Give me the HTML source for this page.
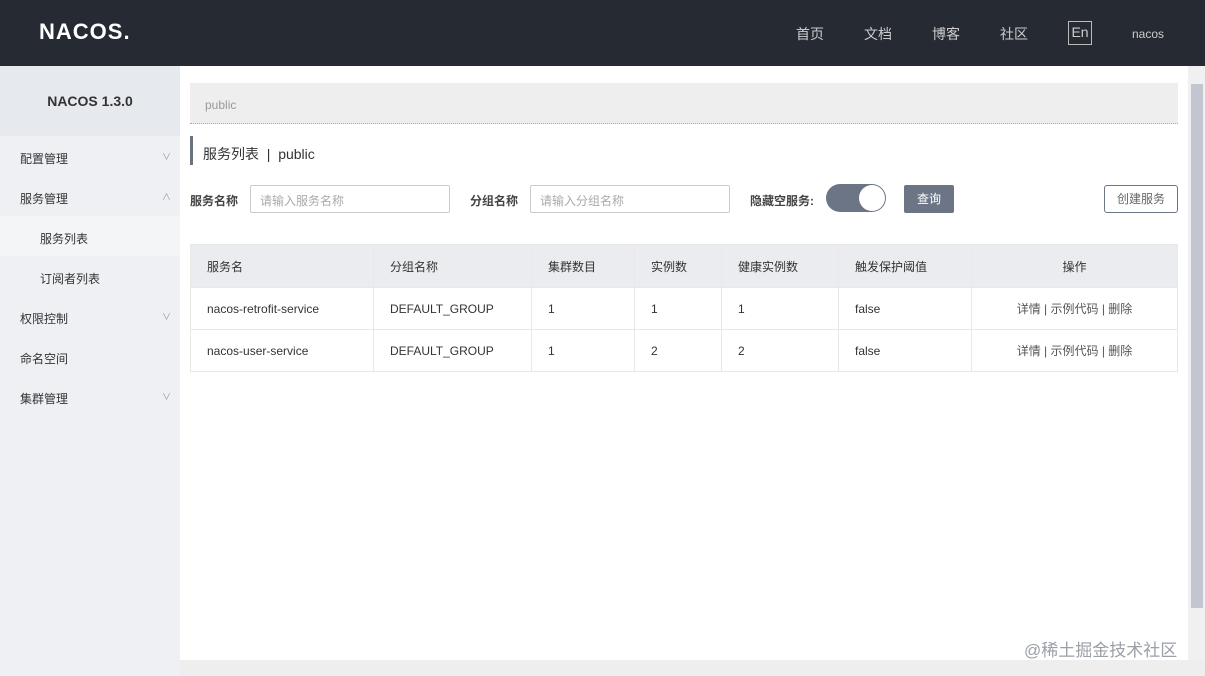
<!DOCTYPE html>
<html><head><meta charset="utf-8"><style>
*{margin:0;padding:0;box-sizing:border-box}
body{width:1205px;height:676px;overflow:hidden;font-family:"Liberation Sans","Noto Sans CJK SC",sans-serif;font-size:12px;color:#333;background:#fff;position:relative}
.hd{position:absolute;left:0;top:0;width:1205px;height:66px;background:#252a33}
.logo{position:absolute;left:39px;top:19px;color:#fff;font-size:22px;font-weight:bold;letter-spacing:1px}
.nav{position:absolute;top:24px;color:#ccc;font-size:14px}
.en{position:absolute;left:1068px;top:21px;width:24px;height:24px;border:1px solid #bbb;color:#ccc;font-size:14px;text-align:center;line-height:21px}
.side{position:absolute;left:0;top:66px;width:180px;height:610px;background:#eef0f3}
.ver{height:70px;text-align:center;line-height:70px;font-weight:bold;font-size:14px;color:#333;background:#e6e9ee}
.mi{position:absolute;left:20px;font-size:12px;color:#333}
.ar{position:absolute;left:162px;font-size:9px;color:#999}
.sel{position:absolute;left:0;top:150px;width:180px;height:40px;background:#f4f5f6}
.bc{position:absolute;left:190px;top:83px;width:988px;height:41px;background:#eee;border-bottom:1px dotted #aab;color:#999;padding:15px 15px;font-size:12px}
.ttl{position:absolute;left:190px;top:136px;height:29px;border-left:3px solid #6a7380;padding-left:10px;line-height:36px;font-size:14px;color:#333}
.lb{position:absolute;top:192px;font-weight:bold;font-size:12px;color:#444}
.in{position:absolute;top:185px;width:200px;height:28px;border:1px solid #ccc;border-radius:2px;padding:6px 9px;color:#aaa;font-size:12px}
.tg{position:absolute;left:826px;top:184px;width:60px;height:28px;border-radius:14px;background:#6c7585}
.tg:after{content:"";position:absolute;right:1px;top:1px;width:26px;height:26px;border-radius:50%;background:#fff}
.q{position:absolute;left:904px;top:185px;width:50px;height:28px;background:#6c7585;color:#fff;text-align:center;line-height:28px;border-radius:2px}
.cr{position:absolute;left:1104px;top:185px;width:74px;height:28px;border:1px solid #6c7585;border-radius:3px;text-align:center;line-height:26px;color:#666}
table{position:absolute;left:190px;top:244px;width:988px;border-collapse:collapse}
td,th{border:1px solid #e8e8e8;text-align:left;padding:0 16px;font-weight:normal;font-size:12px;color:#333}
th{background:#ebecef;height:43px}
td{height:42px}
.sb{position:absolute;left:1188px;top:66px;width:17px;height:594px;background:#f0f0f0}
.th{position:absolute;left:1191px;top:84px;width:12px;height:524px;background:#c1c6d0}
.hs{position:absolute;left:180px;top:660px;width:1025px;height:16px;background:#eee}
.wm{position:absolute;left:1024px;top:636px;font-size:17px;color:#9aa0a8}
</style></head><body>
<div class="hd"><div class="logo">NACOS.</div>
<span class="nav" style="left:796px">首页</span><span class="nav" style="left:864px">文档</span><span class="nav" style="left:932px">博客</span><span class="nav" style="left:1000px">社区</span>
<div class="en">En</div><span class="nav" style="left:1132px;font-size:12px;top:27px">nacos</span></div>
<div class="side"><div class="ver">NACOS 1.3.0</div>
<div class="sel"></div>
<span class="mi" style="top:84px">配置管理</span><span class="ar" style="top:84px">∨</span>
<span class="mi" style="top:124px">服务管理</span><span class="ar" style="top:124px">∧</span>
<span class="mi" style="top:164px;left:40px">服务列表</span>
<span class="mi" style="top:204px;left:40px">订阅者列表</span>
<span class="mi" style="top:244px">权限控制</span><span class="ar" style="top:244px">∨</span>
<span class="mi" style="top:284px">命名空间</span>
<span class="mi" style="top:324px">集群管理</span><span class="ar" style="top:324px">∨</span>
</div>
<div class="bc">public</div>
<div class="ttl">服务列表 &nbsp;|&nbsp; public</div>
<span class="lb" style="left:190px">服务名称</span><div class="in" style="left:250px">请输入服务名称</div>
<span class="lb" style="left:470px">分组名称</span><div class="in" style="left:530px">请输入分组名称</div>
<span class="lb" style="left:750px">隐藏空服务:</span><div class="tg"></div>
<div class="q">查询</div><div class="cr">创建服务</div>
<table>
<tr><th style="width:183px">服务名</th><th style="width:158px">分组名称</th><th style="width:103px">集群数目</th><th style="width:87px">实例数</th><th style="width:117px">健康实例数</th><th style="width:133px">触发保护阈值</th><th style="text-align:center">操作</th></tr>
<tr><td>nacos-retrofit-service</td><td>DEFAULT_GROUP</td><td>1</td><td>1</td><td>1</td><td>false</td><td style="text-align:center;color:#555">详情 | 示例代码 | 删除</td></tr>
<tr><td>nacos-user-service</td><td>DEFAULT_GROUP</td><td>1</td><td>2</td><td>2</td><td>false</td><td style="text-align:center;color:#555">详情 | 示例代码 | 删除</td></tr>
</table>
<div class="sb"></div><div class="th"></div><div class="hs"></div>
<div class="wm">@稀土掘金技术社区</div>
</body></html>
